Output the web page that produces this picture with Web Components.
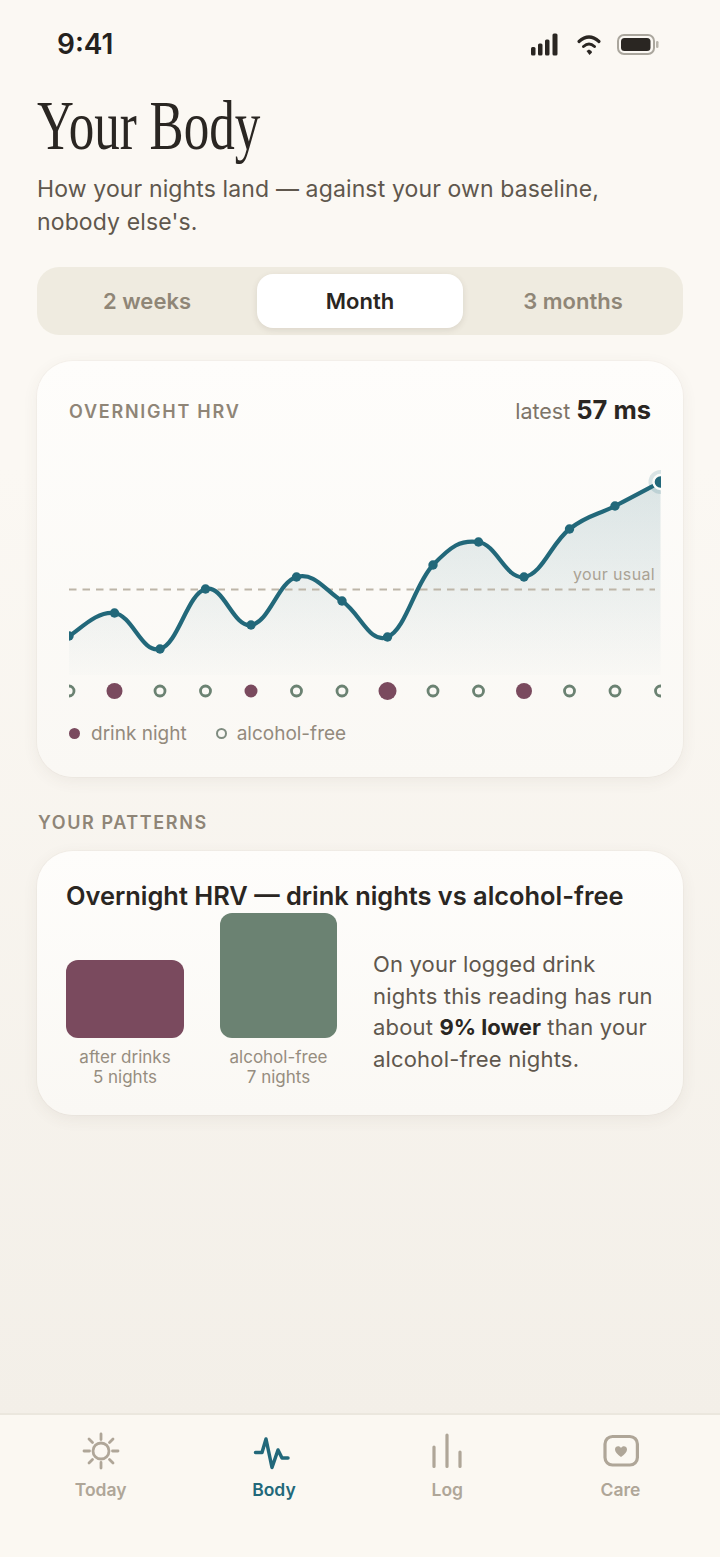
<!DOCTYPE html>
<html lang="en">
<head>
<meta charset="utf-8">
<title>Your Body</title>
<style>
    html, body { margin: 0; padding: 0; }
    body {
        width: 720px;
        height: 1557px;
        overflow: hidden;
        font-family: Inter, "Liberation Sans", sans-serif;
        background: linear-gradient(180deg, #fbf8f3 0%, #fbf8f3 30%, #f3efe8 91%);
    }
    .app { display: flex; flex-direction: column; height: 1557px; }
</style>
</head>
<body>
<div class="app">
    <status-bar></status-bar>
    <page-header title="Your Body">How your nights land — against your own baseline, nobody else's.</page-header>
    <range-tabs options="2 weeks,Month,3 months" active="1"></range-tabs>
    <hrv-card></hrv-card>
    <section-label>YOUR PATTERNS</section-label>
    <pattern-card></pattern-card>
    <tab-bar></tab-bar>
</div>

<script>
class StatusBar extends HTMLElement {
    constructor() {
        super();
        this.attachShadow({ mode: 'open' });
    }

    connectedCallback() {
        this.shadowRoot.innerHTML = `
            <style>
                :host { display: flex; justify-content: space-between; align-items: flex-start; height: 88px; padding: 26px 61px 0 57px; box-sizing: border-box; }
                .time { font-size: 28px; font-weight: 600; line-height: 36px; color: #24211d; }
                svg { display: block; margin-top: 4px; }
            </style>
            <span class="time">9:41</span>
            <svg width="130" height="30" viewBox="530 30 130 30">
                <rect x="532" y="47" width="4.500" height="8.500" rx="1.500" fill="#2a2622"/>
                <rect x="539" y="43.500" width="4.500" height="12" rx="1.500" fill="#2a2622"/>
                <rect x="546" y="39.500" width="4.500" height="16" rx="1.500" fill="#2a2622"/>
                <rect x="553.500" y="33.500" width="5" height="22" rx="1.500" fill="#2a2622"/>
                <path d="M580 41.500 Q590 32.500 600 41.500" fill="none" stroke="#2a2622" stroke-width="3.200" stroke-linecap="round"/>
                <path d="M584.500 46.500 Q590 41.500 595.500 46.500" fill="none" stroke="#2a2622" stroke-width="3" stroke-linecap="round"/>
                <path d="M587.500 51 L590 49.500 L592.500 51 L593 52.500 L590.500 55 Z" fill="#2a2622"/>
                <rect x="619" y="35" width="36" height="19" rx="6" fill="none" stroke="#aaa69d" stroke-width="2"/>
                <rect x="622" y="38" width="29.500" height="13" rx="3.500" fill="#2a2622"/>
                <rect x="657" y="41" width="2.500" height="7" rx="1.200" fill="#b9b5ac"/>
            </svg>
        `;
    }
}

class PageHeader extends HTMLElement {
    constructor() {
        super();
        this.attachShadow({ mode: 'open' });
    }

    connectedCallback() {
        this.shadowRoot.innerHTML = `
            <style>
                :host { display: block; padding: 0 80px 0 37px; height: 179px; color: #5f574d; }
                h1 {
                    margin: 0;
                    font: 400 69px/76px "Liberation Serif", serif;
                    color: #2a2622;
                    transform: scaleX(0.74);
                    transform-origin: left center;
                    white-space: nowrap;
                }
                p { margin: 9px 0 0; font-size: 23px; line-height: 33px; letter-spacing: 0.13px; }
            </style>
            <h1>${this.getAttribute('title')}</h1>
            <p><slot></slot></p>
        `;
    }
}

class RangeTabs extends HTMLElement {
    constructor() {
        super();
        this.attachShadow({ mode: 'open' });
    }

    connectedCallback() {
        const options = this.getAttribute('options').split(',');
        const active = parseInt(this.getAttribute('active'));
        let items = '';
        options.forEach((o, i) => {
            items += `<div class="opt ${i === active ? 'on' : ''}">${o}</div>`;
        });
        this.shadowRoot.innerHTML = `
            <style>
                :host { display: grid; grid-template-columns: 206px 206px 206px; gap: 0; justify-content: space-between; margin: 0 37px; height: 68px; padding: 7px 7px; box-sizing: border-box; background: #efebe0; border-radius: 22px; }
                .opt { display: flex; align-items: center; justify-content: center; font-size: 22px; font-weight: 600; color: #8f8677; border-radius: 16px; }
                .on { background: #fff; color: #2a2622; box-shadow: 0 2px 6px rgba(70, 60, 40, 0.12); }
            </style>
            ${items}
        `;
    }
}

class HrvCard extends HTMLElement {
    constructor() {
        super();
        this.attachShadow({ mode: 'open' });
    }

    connectedCallback() {
        const ys = [636, 613, 649, 589, 625, 577, 601, 637, 565, 542, 577, 529, 506, 482];
        const dots = [null, 8, null, null, 6.5, null, null, 9, null, null, 8, null, null, null];
        const left = 69, step = 45.5, top = 460;
        const pts = ys.map((y, i) => ({ x: left + i * step, y: y - top }));

        // smooth line through every point (catmull-rom to bezier)
        let line = `M${pts[0].x} ${pts[0].y}`;
        for (let i = 0; i < pts.length - 1; i++) {
            const p0 = pts[Math.max(i - 1, 0)];
            const p1 = pts[i];
            const p2 = pts[i + 1];
            const p3 = pts[Math.min(i + 2, pts.length - 1)];
            const c1x = p1.x + (p2.x - p0.x) / 5;
            const c1y = p1.y + (p2.y - p0.y) / 5;
            const c2x = p2.x - (p3.x - p1.x) / 5;
            const c2y = p2.y - (p3.y - p1.y) / 5;
            line += ` C${c1x} ${c1y} ${c2x} ${c2y} ${p2.x} ${p2.y}`;
        }
        const area = `${line} L${pts[13].x} 215 L${left} 215 Z`;

        let marks = '';
        pts.slice(0, 13).forEach(p => {
            marks += `<circle cx="${p.x}" cy="${p.y}" r="4.700" fill="#22687a"/>`;
        });

        let nights = '';
        pts.forEach((p, i) => {
            if (dots[i]) {
                nights += `<circle cx="${p.x}" cy="231" r="${dots[i]}" fill="#7a4a5e"/>`;
            } else {
                nights += `<circle cx="${p.x}" cy="231" r="5" fill="none" stroke="#6b8272" stroke-width="2.800"/>`;
            }
        });

        this.shadowRoot.innerHTML = `
            <style>
                :host { display: block; margin: 26px 37px 0; height: 416px; box-sizing: border-box; padding: 33px 32px 0; background: linear-gradient(180deg, #fefdfb, #faf8f4); border-radius: 36px; box-shadow: 0 4px 16px rgba(90, 75, 50, 0.07), 0 0 0 1px rgba(120, 105, 80, 0.03); }
                .head { display: flex; justify-content: space-between; align-items: center; height: 34px; }
                .name { font-size: 18px; font-weight: 600; letter-spacing: 1.750px; color: #8f8577; }
                .latest { font-size: 21.5px; color: #7d7468; line-height: 32px; margin-top: -2px; }
                .latest b { font-size: 25.500px; font-weight: 700; color: #2a2622; }
                svg { display: block; margin: 32px 0 0 0; }
                .legend { display: flex; align-items: center; margin-top: 12px; font-size: 19px; color: #938a7d; }
                .dot { width: 11px; height: 11px; border-radius: 50%; background: #7a4a5e; margin-right: 11px; }
                .ring { width: 11px; height: 11px; border-radius: 50%; border: 2px solid #7f8c80; box-sizing: border-box; margin: 0 10px 0 29px; }
            </style>
            <div class="head">
                <span class="name">OVERNIGHT HRV</span>
                <span class="latest">latest <b>57 ms</b></span>
            </div>
            <svg width="592" height="250" viewBox="69 0 592 250">
                <defs>
                    <linearGradient id="fill" x1="0" y1="0" x2="0" y2="215" gradientUnits="userSpaceOnUse">
                        <stop offset="0.08" stop-color="#22687a" stop-opacity="0.16"/>
                        <stop offset="1" stop-color="#22687a" stop-opacity="0.01"/>
                    </linearGradient>
                </defs>
                <path d="${area}" fill="url(#fill)"/>
                <line x1="69" y1="129.500" x2="655" y2="129.500" stroke="#bdb5a8" stroke-width="2" stroke-dasharray="7.500 6"/>
                <text x="655" y="120" text-anchor="end" font-size="16" letter-spacing="0.35" fill="#aaa294">your usual</text>
                <path d="${line}" fill="none" stroke="#22687a" stroke-width="4.200" stroke-linecap="round"/>
                ${marks}
                <circle cx="${pts[13].x}" cy="${pts[13].y}" r="12" fill="#22687a" fill-opacity="0.16"/>
                <circle cx="${pts[13].x}" cy="${pts[13].y}" r="7" fill="#22687a" stroke="#fdfcfa" stroke-width="2.400"/>
                ${nights}
            </svg>
            <div class="legend">
                <span class="dot"></span>drink night
                <span class="ring"></span>alcohol-free
            </div>
        `;
    }
}

class SectionLabel extends HTMLElement {
    constructor() {
        super();
        this.attachShadow({ mode: 'open' });
    }

    connectedCallback() {
        this.shadowRoot.innerHTML = `
            <style>
                :host { display: block; margin: 34px 0 0 38px; height: 40px; font-size: 18px; line-height: 24px; font-weight: 600; letter-spacing: 1.6px; color: #8f8577; }
            </style>
            <slot></slot>
        `;
    }
}

class PatternCard extends HTMLElement {
    constructor() {
        super();
        this.attachShadow({ mode: 'open' });
    }

    connectedCallback() {
        this.shadowRoot.innerHTML = `
            <style>
                :host { display: block; margin: 0 37px; height: 264px; box-sizing: border-box; padding: 27px 26px 0 29px; background: linear-gradient(180deg, #fefdfb, #faf8f4); border-radius: 36px; box-shadow: 0 4px 16px rgba(90, 75, 50, 0.07), 0 0 0 1px rgba(120, 105, 80, 0.03); }
                h2 { margin: 0; font-size: 25.4px; line-height: 35px; font-weight: 600; color: #2a2622; white-space: nowrap; }
                .row { display: flex; align-items: flex-end; }
                .col { display: flex; flex-direction: column; align-items: center; font-size: 17px; line-height: 20px; color: #968d80; }
                .bar { border-radius: 12px; margin-bottom: 9px; }
                .low { width: 118px; height: 78px; background: #7a4a5e; margin-right: 36px; }
                .high { width: 117px; height: 125px; background: #6b8272; }
                .cols { display: flex; align-items: flex-end; }
                .col span { display: block; text-align: center; }
                p { margin: 0 0 0 36px; padding-bottom: 12px; flex: none; width: 284px; font-size: 22px; line-height: 31.500px; letter-spacing: 0.17px; color: #5f574d; }
                p b { font-weight: 700; color: #2a2622; letter-spacing: 0; }
            </style>
            <h2>Overnight HRV — drink nights vs alcohol-free</h2>
            <div class="row">
                <div class="cols">
                    <div class="col"><div class="bar low"></div><span style="margin-right:36px">after drinks<br>5 nights</span></div>
                    <div class="col"><div class="bar high"></div><span>alcohol-free<br>7 nights</span></div>
                </div>
                <p>On your logged drink nights this reading has run about <b>9% lower</b> than your alcohol-free nights.</p>
            </div>
        `;
    }
}

class TabBar extends HTMLElement {
    constructor() {
        super();
        this.attachShadow({ mode: 'open' });
    }

    connectedCallback() {
        const tabs = [
            { label: 'Today', sw: 2.8, icon: `<circle cx="18" cy="18" r="8"/><path d="M18 1v5.500M18 29.500v5.500M1 18h5.500M29.500 18h5.500M6 6l3.500 3.500M26.500 26.500l3.500 3.500M6 30l3.500-3.500M26.500 9.500l3.500-3.500"/>` },
            { label: 'Body', on: true, sw: 3.5, icon: `<path d="M-0.500 19.500H6L10 6l6 28.500 6-17.500 4 8h6"/>` },
            { label: 'Log', sw: 3.2, icon: `<path d="M5 14v19.500M18 2v31.500M31 19v14.500"/>` },
            { label: 'Care', sw: 3.2, icon: `<rect x="2" y="3.500" width="32.400" height="28.500" rx="7.500"/><path d="M18 24c-4-3-6-5.200-6-7.600 0-3.600 4.500-4.400 6-1.400 1.500-3 6-2.200 6 1.400 0 2.400-2 4.600-6 7.600z" fill="currentColor" stroke="none"/>` }
        ];
        let items = '';
        tabs.forEach(t => {
            items += `
                <div class="tab ${t.on ? 'on' : ''}">
                    <svg width="36" height="36" viewBox="0 0 36 36" fill="none" stroke="currentColor" stroke-width="${t.sw}" stroke-linecap="round" stroke-linejoin="round">${t.icon}</svg>
                    <span>${t.label}</span>
                </div>
            `;
        });
        this.shadowRoot.innerHTML = `
            <style>
                :host { display: grid; grid-template-columns: repeat(4, 173.300px); margin-top: auto; height: 144px; box-sizing: border-box; padding: 18px 14px 0; background: #fbf8f2; border-top: 2px solid #ebe7de; }
                .tab { display: flex; flex-direction: column; align-items: center; gap: 9px; color: #afa698; font-size: 17.500px; line-height: 24px; font-weight: 600; }
                .on { color: #22687a; }
                svg { display: block; overflow: visible; }
            </style>
            ${items}
        `;
    }
}

customElements.define('status-bar', StatusBar);
customElements.define('page-header', PageHeader);
customElements.define('range-tabs', RangeTabs);
customElements.define('hrv-card', HrvCard);
customElements.define('section-label', SectionLabel);
customElements.define('pattern-card', PatternCard);
customElements.define('tab-bar', TabBar);
</script>
</body>
</html>
